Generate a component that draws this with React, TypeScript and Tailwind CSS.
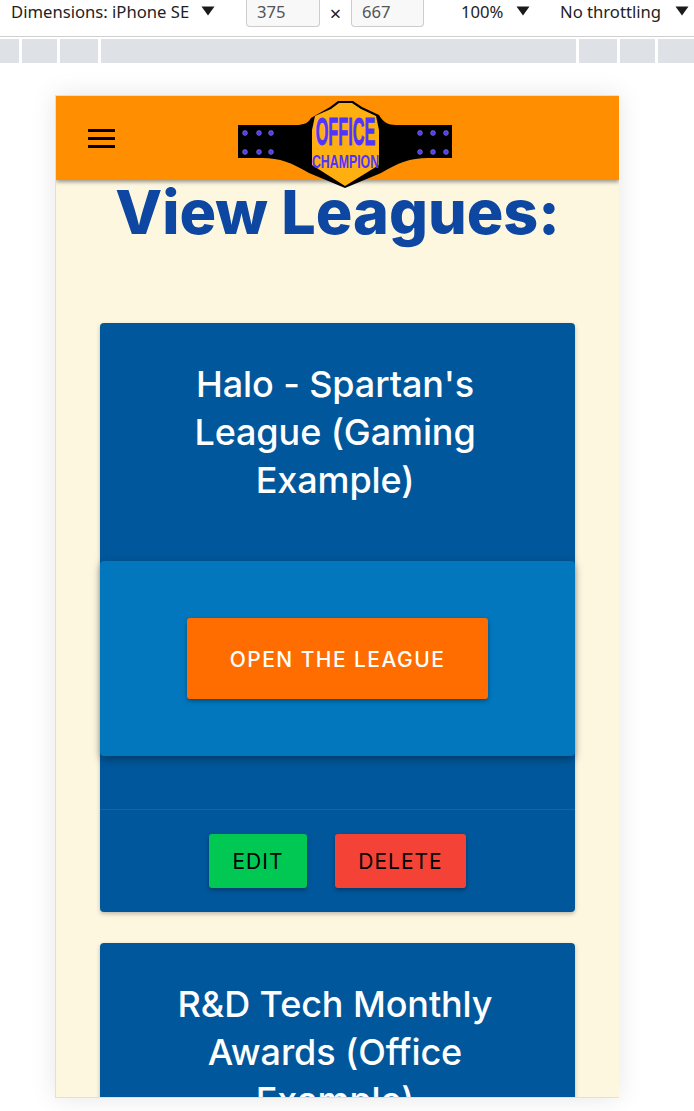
const Caret = () => (
  <svg width="14" height="10" viewBox="0 0 14 10" className="mt-[6px] shrink-0">
    <path d="M0.5 0.5H13.5L7 9.5Z" fill="#1a1a1a" />
  </svg>
);

const Logo = () => (
  <svg width="214" height="88" viewBox="0 0 214 88" className="shrink-0">
    <path
      d="M0 24H58C66 24 70 22 73 17L92 6L100 0H115L124 6L141 14C145 21 150 24 158 24H214V57H190C172 57 160 62 143 72L107 87L71 72C54 62 42 57 24 57H0Z"
      fill="#000"
    />
    <path
      d="M74 29L77 15L93 8L101 2H114L123 8L138 15L141 29L141 64L107 85L74 64Z"
      fill="#FFB010"
    />
    {[7, 21, 33, 182, 195, 208].map((x) =>
      [32, 51].map((y) => (
        <circle key={`${x}-${y}`} cx={x} cy={y} r="2.4" fill="#4F3BF0" stroke="#8C80E8" strokeWidth="0.6" />
      ))
    )}
    <text
      transform="translate(107.5 44) scale(0.74 1.75)"
      textAnchor="middle"
      fontFamily="'Liberation Sans', sans-serif"
      fontWeight="700"
      fontSize="22"
      fill="#4F33FF"
      stroke="#4F33FF"
      strokeWidth="0.5"
    >
      OFFICE
    </text>
    <text
      transform="translate(107.5 67) scale(0.95 1.4)"
      textAnchor="middle"
      fontFamily="'Liberation Sans', sans-serif"
      fontWeight="700"
      fontSize="13"
      fill="#4F33FF"
    >
      CHAMPION
    </text>
  </svg>
);

const LeagueCard = ({ title, clipped }: { title: string; clipped?: boolean }) => (
  <div className="rounded bg-[#01579B] shadow-[0_2px_4px_rgba(0,0,0,0.25)]">
    <div className="h-[238px] pl-[55px] pr-[60px] pt-[37px] text-center text-[36px] leading-[48px] font-medium tracking-[-0.1px] text-white">
      {title}
    </div>
    {!clipped && (
      <>
        <div className="flex h-[195px] items-center justify-center rounded bg-[#0277BD] shadow-[0_3px_8px_rgba(0,0,0,0.35)]">
          <button className="flex h-[81px] w-[301px] items-center justify-center rounded-[3px] bg-[#FF6D00] pt-[2px] text-[21px] font-medium tracking-[1.45px] text-white shadow-[0_2px_4px_rgba(0,0,0,0.35)]">
            OPEN THE LEAGUE
          </button>
        </div>
        <div className="h-[53px]" />
        <div className="flex h-[103px] justify-center gap-7 border-t border-[#1565a5] pt-6">
          <button className="flex h-[54px] w-[98px] items-center justify-center rounded-[3px] bg-[#00C853] pt-[2px] text-[21px] tracking-[1px] text-black shadow-[0_2px_4px_rgba(0,0,0,0.35)]">
            EDIT
          </button>
          <button className="flex h-[54px] w-[131px] items-center justify-center rounded-[3px] bg-[#F44336] pt-[2px] text-[21px] tracking-[1px] text-black shadow-[0_2px_4px_rgba(0,0,0,0.35)]">
            DELETE
          </button>
        </div>
      </>
    )}
  </div>
);

export default function App() {
  return (
    <div className="h-[1111px] w-[694px] overflow-hidden bg-white font-['Inter',sans-serif]">
      <div className="flex h-[37px] items-start border-b border-[#d0d0d0] font-['Noto_Sans',sans-serif] text-[16.65px] leading-[24px] text-[#222]">
        <span className="ml-[11px] w-[190px] whitespace-nowrap">Dimensions: iPhone SE</span>
        <Caret />
        <div className="ml-[31px] flex h-[27px] w-[74px] items-center rounded-b border border-t-0 border-[#ccc] bg-[#f8f8f8] pb-[3px] pl-[10px] text-[#555]">
          375
        </div>
        <span className="w-[31px] pt-[2px] text-center text-[20px]">×</span>
        <div className="flex h-[27px] w-[73px] items-center rounded-b border border-t-0 border-[#ccc] bg-[#f8f8f8] pb-[3px] pl-[10px] text-[#555]">
          667
        </div>
        <span className="ml-[37px] w-[48px]">100%</span>
        <span className="ml-[7px]"><Caret /></span>
        <span className="ml-[30px] w-[108px] whitespace-nowrap">No throttling</span>
        <span className="ml-[7px]"><Caret /></span>
      </div>

      <div className="mt-[2px] flex h-[24px] gap-[3px]">
        <div className="w-[19px] bg-[#DEE1E6]" />
        <div className="w-[35px] bg-[#DEE1E6]" />
        <div className="w-[38px] bg-[#DEE1E6]" />
        <div className="w-[475px] bg-[#DEE1E6]" />
        <div className="w-[38px] bg-[#DEE1E6]" />
        <div className="w-[35px] bg-[#DEE1E6]" />
        <div className="flex-1 bg-[#DEE1E6]" />
      </div>

      <div className="ml-[55px] mt-[32px] flex h-[1003px] w-[564px] flex-col overflow-hidden border-y border-l border-[#e0e0e0] bg-[#FEF7E0] shadow-[0_0_24px_rgba(0,0,0,0.1)]">
        <div className="relative z-10 flex h-[84px] shrink-0 items-center bg-[#FF8F00] pl-8 shadow-[0_2px_4px_rgba(0,0,0,0.4)]">
          <svg width="27" height="19" viewBox="0 0 27 19" className="shrink-0">
            <rect y="0" width="27" height="3" />
            <rect y="8" width="27" height="3" />
            <rect y="16" width="27" height="3" />
          </svg>
          <div className="ml-[123px] mt-[14px]">
            <Logo />
          </div>
        </div>
        <h1 className="mt-[-4px] text-center text-[61px] leading-[72px] font-extrabold whitespace-nowrap text-[#0D47A1]">
          View Leagues:
        </h1>
        <div className="flex flex-col gap-[31px] px-11 pt-[75px]">
          <LeagueCard title="Halo - Spartan's League (Gaming Example)" />
          <LeagueCard title="R&D Tech Monthly Awards (Office Example)" clipped />
        </div>
      </div>
    </div>
  );
}
